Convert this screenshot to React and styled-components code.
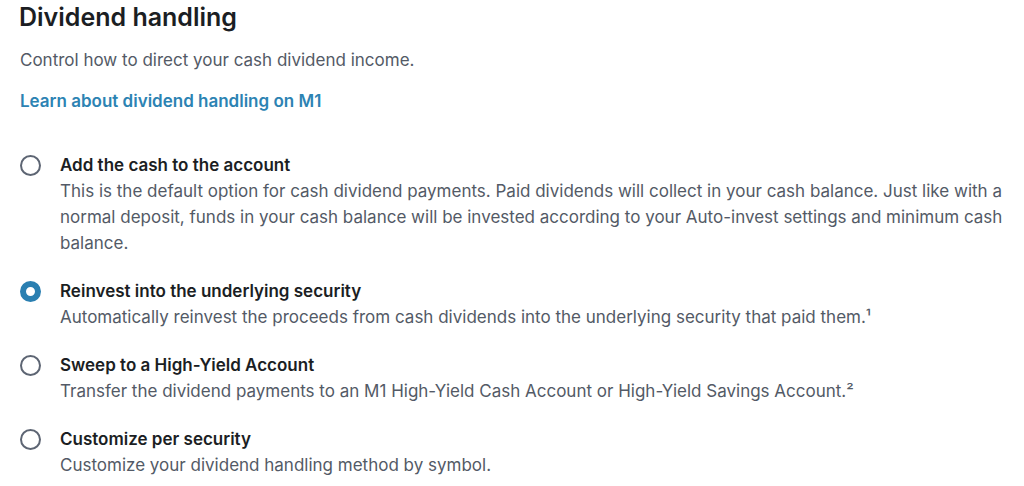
import React, { useState } from "react";
import styled, { createGlobalStyle } from "styled-components";

const Global = createGlobalStyle`
  html, body { margin: 0; padding: 0; background: #ffffff; }
  body { font-family: Inter, "Noto Sans", sans-serif; -webkit-font-smoothing: antialiased; }
`;

const Page = styled.main`
  padding: 0 14px 0 19px;
  display: flex;
  flex-direction: column;
`;

const Title = styled.h1`
  margin: 0;
  padding-top: 1px;
  font-size: 25px;
  line-height: 32px;
  font-weight: 600;
  color: #1b1e23;
`;

const Lead = styled.p`
  margin: 14px 0 0 1px;
  font-size: 17px;
  line-height: 26px;
  color: #535a66;
`;

const Link = styled.a`
  margin: 15px 0 0 1px;
  font-size: 17px;
  line-height: 26px;
  font-weight: 600;
  color: #2c83b3;
  text-decoration: none;
  align-self: flex-start;
`;

const Options = styled.div`
  margin-top: 38px;
  display: flex;
  flex-direction: column;
  gap: 22px;
`;

const Option = styled.label`
  display: flex;
  gap: 19px;
  cursor: pointer;
`;

const RadioWrap = styled.span`
  flex: none;
  width: 22px;
  height: 26px;
  display: flex;
  align-items: center;
  justify-content: center;
`;

const Radio = styled.span`
  box-sizing: border-box;
  width: 21px;
  height: 21px;
  border-radius: 50%;
  border: ${(p) => (p.$checked ? "6.5px solid #2a7fb1" : "2px solid #5d6573")};
  background: #fff;
`;

const Text = styled.span`
  display: flex;
  flex-direction: column;
`;

const OptionTitle = styled.span`
  font-size: 17px;
  line-height: 26px;
  font-weight: 600;
  color: #1b1e23;
`;

const OptionDesc = styled.span`
  font-size: 17px;
  line-height: 26px;
  color: #535a66;
`;

const options = [
  {
    id: "cash",
    title: "Add the cash to the account",
    desc: "This is the default option for cash dividend payments. Paid dividends will collect in your cash balance. Just like with a normal deposit, funds in your cash balance will be invested according to your Auto-invest settings and minimum cash balance.",
  },
  {
    id: "reinvest",
    title: "Reinvest into the underlying security",
    desc: "Automatically reinvest the proceeds from cash dividends into the underlying security that paid them.¹",
  },
  {
    id: "sweep",
    title: "Sweep to a High-Yield Account",
    desc: "Transfer the dividend payments to an M1 High-Yield Cash Account or High-Yield Savings Account.²",
  },
  {
    id: "custom",
    title: "Customize per security",
    desc: "Customize your dividend handling method by symbol.",
  },
];

export default function App() {
  const [value, setValue] = useState("reinvest");
  return (
    <>
      <Global />
      <Page>
        <Title>Dividend handling</Title>
        <Lead>Control how to direct your cash dividend income.</Lead>
        <Link href="#">Learn about dividend handling on M1</Link>
        <Options role="radiogroup">
          {options.map((o) => (
            <Option key={o.id} onClick={() => setValue(o.id)}>
              <RadioWrap>
                <Radio $checked={value === o.id} />
              </RadioWrap>
              <Text>
                <OptionTitle>{o.title}</OptionTitle>
                <OptionDesc>{o.desc}</OptionDesc>
              </Text>
            </Option>
          ))}
        </Options>
      </Page>
    </>
  );
}
